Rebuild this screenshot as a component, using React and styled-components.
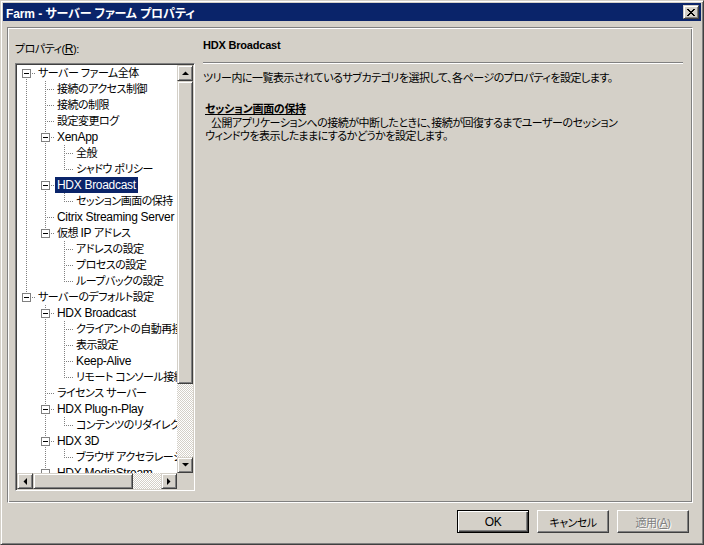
import React from "react";
import styled, { createGlobalStyle, css } from "styled-components";

const FONT = `"Liberation Sans", "Noto Sans CJK JP", sans-serif`;

const GlobalStyle = createGlobalStyle`
  html, body { margin: 0; padding: 0; background: #d4d0c8; overflow: hidden; }
  * { box-sizing: border-box; }
`;

const raised = css`
  border: 1px solid;
  border-color: #d4d0c8 #404040 #404040 #d4d0c8;
  box-shadow: inset 1px 1px #fff, inset -1px -1px #808080;
  background: #d4d0c8;
`;

const Window = styled.div`
  width: 704px;
  height: 545px;
  background: #d4d0c8;
  border: 1px solid;
  border-color: #d4d0c8 #404040 #404040 #d4d0c8;
  box-shadow: inset 1px 1px #fff, inset -1px -1px #808080;
  padding: 2px;
  display: flex;
  flex-direction: column;
  font-family: ${FONT};
  font-size: 11px;
  letter-spacing: -0.5px;
  font-feature-settings: "palt";
  color: #000;
`;

const Latin = styled.span`
  font-size: 12px;
  letter-spacing: -0.3px;
`;

const TitleBar = styled.div`
  height: 18px;
  flex: none;
  background: #0a246a;
  display: flex;
  align-items: center;
  justify-content: space-between;
  padding: 0 2px 0 3px;
`;

const TitleText = styled.span`
  color: #fff;
  font-weight: bold;
  font-size: 12px;
  letter-spacing: -0.1px;
  white-space: nowrap;
`;

const CloseButton = styled.div`
  ${raised};
  width: 16px;
  height: 14px;
  display: flex;
  align-items: center;
  justify-content: center;
`;

const Body = styled.div`
  flex: 1;
  display: flex;
  flex-direction: column;
  padding: 6px 8px 0 4px;
`;

const Frame = styled.div`
  height: 476px;
  flex: none;
  border: 1px solid;
  border-color: #808080 #fff #fff #808080;
  box-shadow: inset 1px 1px #fff, inset -1px -1px #808080;
  display: flex;
  gap: 8px;
  padding: 0 9px 11px 7px;
`;

const LeftCol = styled.div`
  width: 180px;
  flex: none;
  display: flex;
  flex-direction: column;
`;

const FieldLabel = styled.div`
  margin-top: 14px;
  height: 14px;
  line-height: 14px;
  white-space: nowrap;
`;

const TreeBox = styled.div`
  margin-top: 7px;
  width: 180px;
  height: 428px;
  border: 1px solid;
  border-color: #808080 #fff #fff #808080;
  box-shadow: inset 1px 1px #404040, inset -1px -1px #d4d0c8;
  padding: 1px;
  background: #fff;
  display: grid;
  grid-template-columns: 1fr 16px;
  grid-template-rows: 1fr 16px;
`;

const TreeContent = styled.div`
  overflow: hidden;
  background: #fff;
`;

const Row = styled.div`
  height: 16px;
  display: flex;
  align-items: center;
  white-space: nowrap;
`;

const ItemText = styled.span`
  height: 16px;
  line-height: 16px;
  padding: 0 2px;
  background: ${(p) => (p.$selected ? "#0a246a" : "transparent")};
  color: ${(p) => (p.$selected ? "#fff" : "#000")};
`;

const VScroll = styled.div`
  display: flex;
  flex-direction: column;
`;

const HScroll = styled.div`
  display: flex;
`;

const ScrollButton = styled.div`
  ${raised};
  width: 16px;
  height: 16px;
  flex: none;
  display: flex;
  align-items: center;
  justify-content: center;
`;

const Thumb = styled.div`
  ${raised};
  flex: none;
  ${(p) => (p.$vertical ? `height: ${p.$size}px;` : `width: ${p.$size}px;`)}
`;

const Track = styled.div`
  flex: 1;
  background-color: #fff;
  background-image: repeating-conic-gradient(#d4d0c8 0% 25%, #fff 0% 50%);
  background-size: 2px 2px;
`;

const Corner = styled.div`
  background: #d4d0c8;
`;

const RightCol = styled.div`
  flex: 1;
  display: flex;
  flex-direction: column;
`;

const PageTitle = styled.div`
  margin-top: 10px;
  height: 14px;
  line-height: 14px;
  font-weight: bold;
  font-size: 11px;
  letter-spacing: -0.2px;
`;

const Separator = styled.div`
  margin-top: 10px;
  height: 2px;
  border-top: 1px solid #808080;
  border-bottom: 1px solid #fff;
`;

const Description = styled.div`
  margin-top: 7px;
  line-height: 14px;
  white-space: nowrap;
`;

const SectionTitle = styled.div`
  margin-top: 17px;
  padding-left: 2px;
  line-height: 14px;
  font-weight: bold;
  text-decoration: underline;
  letter-spacing: -0.3px;
  white-space: nowrap;
`;

const SectionText = styled.div`
  margin-top: 1px;
  padding-left: 2px;
  text-indent: 6px;
  line-height: 13px;
  white-space: nowrap;
`;

const Footer = styled.div`
  display: flex;
  justify-content: flex-end;
  gap: 8px;
  padding: 7px 4px 0 0;
`;

const Button = styled.button`
  width: 72px;
  height: 23px;
  padding: 0;
  font-family: ${FONT};
  font-size: 11px;
  letter-spacing: -0.5px;
  font-feature-settings: "palt";
  background: #d4d0c8;
  color: #000;
  border: 1px solid;
  border-color: #fff #404040 #404040 #fff;
  box-shadow: inset -1px -1px #808080;
  ${(p) =>
    p.$default &&
    css`
      border-color: #000;
      box-shadow: inset 1px 1px #fff, inset -1px -1px #404040, inset -2px -2px #808080;
    `}
  &:disabled {
    color: #808080;
    text-shadow: 1px 1px #fff;
  }
`;

// Render ASCII runs slightly larger, as the dialog font's Latin glyphs are wide.
const Txt = ({ children }) => {
  const parts = String(children).split(/([\x21-\x7e][\x20-\x7e]*[\x21-\x7e]|[\x21-\x7e])/);
  return parts.map((p, i) =>
    /[\x21-\x7e]/.test(p) ? <Latin key={i}>{p}</Latin> : <React.Fragment key={i}>{p}</React.Fragment>
  );
};

const Arrow = ({ dir }) => {
  const pts = {
    up: "0,4 7,4 3.5,0.5",
    down: "0,0 7,0 3.5,3.5",
    left: "4,0 4,7 0.5,3.5",
    right: "0,0 0,7 3.5,3.5",
  }[dir];
  const vert = dir === "up" || dir === "down";
  return (
    <svg width={vert ? 7 : 4} height={vert ? 4 : 7} viewBox={vert ? "0 0 7 4" : "0 0 4 7"}>
      <polygon points={pts} fill="#000" />
    </svg>
  );
};

const TREE = [
  {
    label: "サーバー ファーム全体",
    children: [
      { label: "接続のアクセス制御" },
      { label: "接続の制限" },
      { label: "設定変更ログ" },
      { label: "XenApp", children: [{ label: "全般" }, { label: "シャドウ ポリシー" }] },
      { label: "HDX Broadcast", selected: true, children: [{ label: "セッション画面の保持" }] },
      { label: "Citrix Streaming Server" },
      {
        label: "仮想 IP アドレス",
        children: [{ label: "アドレスの設定" }, { label: "プロセスの設定" }, { label: "ループバックの設定" }],
      },
    ],
  },
  {
    label: "サーバーのデフォルト設定",
    children: [
      {
        label: "HDX Broadcast",
        children: [
          { label: "クライアントの自動再接続" },
          { label: "表示設定" },
          { label: "Keep-Alive" },
          { label: "リモート コンソール接続" },
        ],
      },
      { label: "ライセンス サーバー" },
      { label: "HDX Plug-n-Play", children: [{ label: "コンテンツのリダイレクト" }] },
      { label: "HDX 3D", children: [{ label: "ブラウザ アクセラレーション" }] },
      { label: "HDX MediaStream", children: [{ label: "Flash" }] },
      { label: "ヘルス モニタリングと回復" },
    ],
  },
];

function flatten(nodes, level = 0, trail = [], out = []) {
  nodes.forEach((n, i) => {
    const isLast = i === nodes.length - 1;
    out.push({
      label: n.label,
      level,
      trail,
      isLast,
      isFirstRoot: level === 0 && i === 0,
      hasChildren: !!n.children,
      selected: !!n.selected,
    });
    if (n.children) flatten(n.children, level + 1, trail.concat(!isLast), out);
  });
  return out;
}

const ROWS = flatten(TREE);
const IND = 19;

const Connector = ({ row }) => {
  const w = IND * (row.level + 1);
  const lines = [];
  const dot = { stroke: "#808080", strokeDasharray: "1 1", shapeRendering: "crispEdges" };
  row.trail.forEach((has, c) => {
    if (has) lines.push(<line key={"t" + c} x1={IND * c + 9.5} y1={0} x2={IND * c + 9.5} y2={16} {...dot} />);
  });
  const cx = IND * row.level + 9.5;
  if (!row.isFirstRoot) lines.push(<line key="up" x1={cx} y1={0} x2={cx} y2={8} {...dot} />);
  if (!row.isLast) lines.push(<line key="dn" x1={cx} y1={8} x2={cx} y2={16} {...dot} />);
  lines.push(<line key="h" x1={cx - 0.5} y1={8.5} x2={IND * row.level + 19} y2={8.5} {...dot} />);
  return (
    <svg width={w} height={16} style={{ flex: "none" }}>
      {lines}
      {row.hasChildren && (
        <g shapeRendering="crispEdges">
          <rect x={cx - 4} y={4.5} width={8} height={8} fill="#fff" stroke="#808080" />
          <line x1={cx - 2.5} y1={8.5} x2={cx + 2.5} y2={8.5} stroke="#000" />
        </g>
      )}
    </svg>
  );
};

export default function App() {
  return (
    <>
      <GlobalStyle />
      <Window>
        <TitleBar>
          <TitleText>Farm - サーバー ファーム プロパティ</TitleText>
          <CloseButton>
            <svg width="8" height="7" viewBox="0 0 8 7" shapeRendering="crispEdges">
              <path d="M0 0h2v1h-2zM6 0h2v1h-2zM1 1h2v1h-2zM5 1h2v1h-2zM2 2h4v1h-4zM3 3h2v1h-2zM2 4h4v1h-4zM1 5h2v1h-2zM5 5h2v1h-2zM0 6h2v1h-2zM6 6h2v1h-2z" fill="#000" />
            </svg>
          </CloseButton>
        </TitleBar>
        <Body>
          <Frame>
            <LeftCol>
              <FieldLabel>
                プロパティ(<Latin><u>R</u></Latin>):
              </FieldLabel>
              <TreeBox>
                <TreeContent>
                  {ROWS.map((r, i) => (
                    <Row key={i}>
                      <Connector row={r} />
                      <ItemText $selected={r.selected}>
                        <Txt>{r.label}</Txt>
                      </ItemText>
                    </Row>
                  ))}
                </TreeContent>
                <VScroll>
                  <ScrollButton>
                    <Arrow dir="up" />
                  </ScrollButton>
                  <Thumb $vertical $size={303} />
                  <Track />
                  <ScrollButton>
                    <Arrow dir="down" />
                  </ScrollButton>
                </VScroll>
                <HScroll>
                  <ScrollButton>
                    <Arrow dir="left" />
                  </ScrollButton>
                  <Thumb $size={100} />
                  <Track />
                  <ScrollButton>
                    <Arrow dir="right" />
                  </ScrollButton>
                </HScroll>
                <Corner />
              </TreeBox>
            </LeftCol>
            <RightCol>
              <PageTitle>HDX Broadcast</PageTitle>
              <Separator />
              <Description>
                ツリー内に一覧表示されているサブカテゴリを選択して、各ページのプロパティを設定します。
              </Description>
              <SectionTitle>セッション画面の保持</SectionTitle>
              <SectionText>
                公開アプリケーションへの接続が中断したときに、接続が回復するまでユーザーのセッション
                <br />
                ウィンドウを表示したままにするかどうかを設定します。
              </SectionText>
            </RightCol>
          </Frame>
          <Footer>
            <Button $default>
              <Latin>OK</Latin>
            </Button>
            <Button>キャンセル</Button>
            <Button disabled>
              適用(<Latin><u>A</u></Latin>)
            </Button>
          </Footer>
        </Body>
      </Window>
    </>
  );
}
